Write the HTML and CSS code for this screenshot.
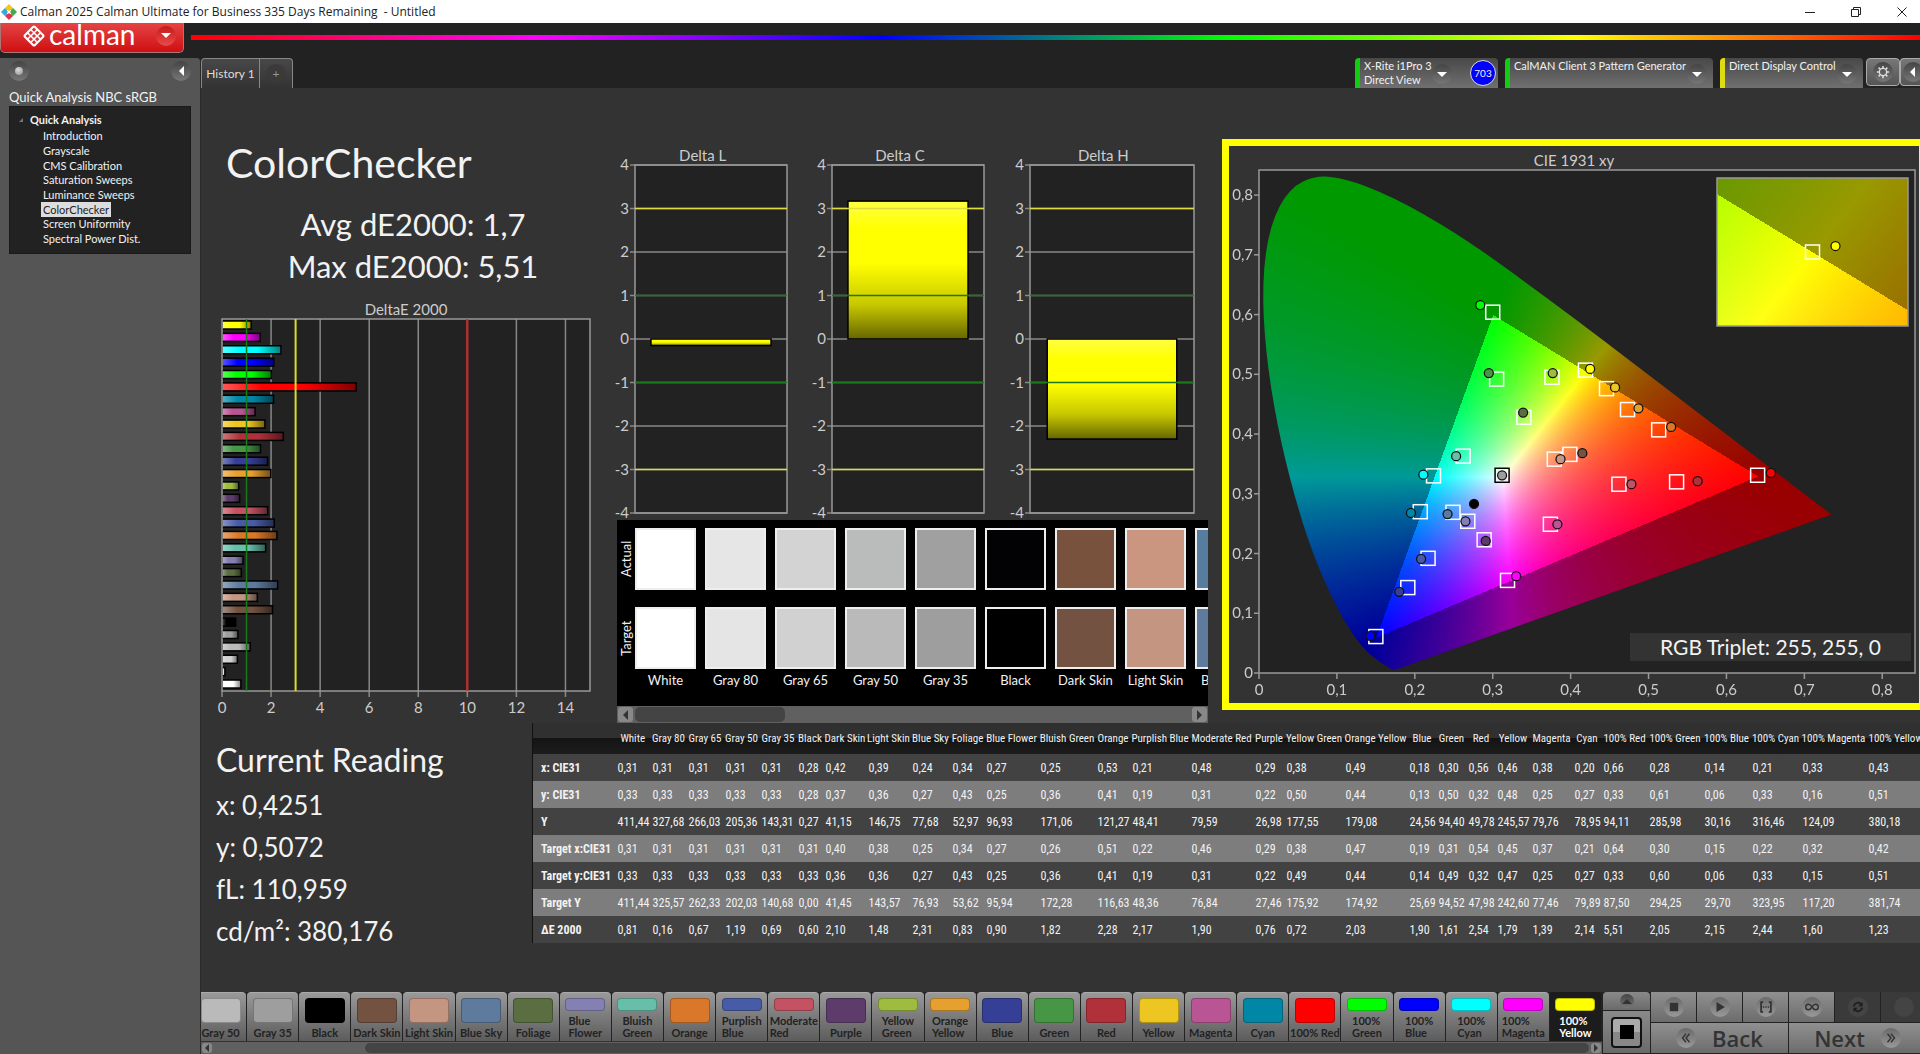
FILE: index.html
```html
<!DOCTYPE html>
<html lang="en">
<head>
  <meta charset="UTF-8">
  <meta name="viewport" content="width=device-width, initial-scale=1.0">
  <title>Calman 2025 Calman Ultimate for Business</title>
  <link rel="stylesheet" href="styles.css">
</head>
<body>
  <header class="titlebar">
    <svg class="app-icon" viewBox="0 0 16 16">
      <path d="M8 0l4 4-4 4-4-4z" fill="#f5c518"/>
      <path d="M4 4l4 4-4 4-4-4z" fill="#35a8dc"/>
      <path d="M12 4l4 4-4 4-4-4z" fill="#3fae49"/>
      <path d="M8 8l4 4-4 4-4-4z" fill="#e0334c"/>
      <path d="M6 6l4 4M10 6l-4 4" stroke="#fff" stroke-width="1"/>
      <circle cx="8" cy="8" r="1.6" fill="#fff"/>
    </svg>
    <span class="window-title">Calman 2025 Calman Ultimate for Business 335 Days Remaining &nbsp;- Untitled</span>
    <div class="window-buttons">
      <button aria-label="Minimize"><svg viewBox="0 0 10 10"><path d="M0 5.5h10"/></svg></button>
      <button aria-label="Restore"><svg viewBox="0 0 10 10"><path d="M.5 2.5h7v7h-7zM2.5 2.5v-2h7v7h-2"/></svg></button>
      <button aria-label="Close"><svg viewBox="0 0 10 10"><path d="M.5.5l9 9M9.5.5l-9 9"/></svg></button>
    </div>
  </header>

  <div class="brandbar">
    <button class="brand">
      <svg class="brand-icon" viewBox="0 0 24 24">
        <rect x="4" y="4" width="16" height="16" rx="2" transform="rotate(45 12 12)" fill="#fff"/>
        <g transform="rotate(45 12 12)" fill="#dd3030">
          <rect x="6" y="6" width="3" height="3"/><rect x="10.5" y="6" width="3" height="3"/><rect x="15" y="6" width="3" height="3"/>
          <rect x="6" y="10.5" width="3" height="3"/><rect x="10.5" y="10.5" width="3" height="3"/><rect x="15" y="10.5" width="3" height="3"/>
          <rect x="6" y="15" width="3" height="3"/><rect x="10.5" y="15" width="3" height="3"/><rect x="15" y="15" width="3" height="3"/>
        </g>
      </svg>
      <span class="brand-name">calman</span>
      <span class="knob knob-red"><i class="arrow-down"></i></span>
    </button>
    <div class="rainbow"></div>
  </div>

  <div class="app">
    <aside class="sidebar">
      <div class="sidebar-top">
        <button class="knob" aria-label="Pin"><i class="dot"></i></button>
        <button class="knob" aria-label="Collapse"><i class="arrow-left"></i></button>
      </div>
      <h3>Quick Analysis NBC sRGB</h3>
      <nav class="tree">
        <div class="tree-root"><i class="tree-mark"></i>Quick Analysis</div>
        <ul>
          <li><a href="#">Introduction</a></li>
          <li><a href="#">Grayscale</a></li>
          <li><a href="#">CMS Calibration</a></li>
          <li><a href="#">Saturation Sweeps</a></li>
          <li><a href="#">Luminance Sweeps</a></li>
          <li><a href="#" class="active">ColorChecker</a></li>
          <li><a href="#">Screen Uniformity</a></li>
          <li><a href="#">Spectral Power Dist.</a></li>
        </ul>
      </nav>
    </aside>

    <main class="main">
      <div class="tabbar">
        <button class="tab">History 1</button>
        <button class="tab tab-add" aria-label="Add tab"><span class="knob">+</span></button>
        <div class="devices">
          <button class="device green meter">
            <span class="device-name">X-Rite i1Pro 3<br>Direct View</span>
            <span class="knob"><i class="arrow-down"></i></span>
            <span class="badge">703</span>
          </button>
          <button class="device green source">
            <span class="device-name">CalMAN Client 3 Pattern Generator</span>
            <span class="knob"><i class="arrow-down"></i></span>
          </button>
          <button class="device yellow display">
            <span class="device-name">Direct Display Control</span>
            <span class="knob"><i class="arrow-down"></i></span>
          </button>
          <button class="square-btn" aria-label="Settings">
            <span class="knob"><svg viewBox="0 0 16 16"><circle cx="8" cy="8" r="4.2" fill="none" stroke="#ddd" stroke-width="1.6"/><path d="M8 1v2.4M8 12.6V15M1 8h2.4M12.6 8H15M3 3l1.8 1.8M11.2 11.2L13 13M13 3l-1.8 1.8M4.8 11.2L3 13" stroke="#ddd" stroke-width="1.8"/></svg></span>
          </button>
          <button class="square-btn cut" aria-label="Collapse panel"><span class="knob"><i class="arrow-left"></i></span></button>
        </div>
      </div>

      <div class="workspace">
        <div class="top-row">
          <section class="summary">
            <h1>ColorChecker</h1>
            <p>Avg dE2000: 1,7</p>
            <p>Max dE2000: 5,51</p>
            <figure>
              <figcaption>DeltaE 2000</figcaption>
              <svg id="deltaE" class="delta-e"></svg>
            </figure>
          </section>

          <section class="center">
            <div class="deltas">
              <figure><figcaption>Delta L</figcaption><svg id="deltaL" class="delta"></svg></figure>
              <figure><figcaption>Delta C</figcaption><svg id="deltaC" class="delta"></svg></figure>
              <figure class="wide"><figcaption>Delta H</figcaption><svg id="deltaH" class="delta"></svg></figure>
            </div>
            <div class="swatches">
              <div class="swatch-labels"><span>Actual</span><span>Target</span></div>
              <div class="swatch-list" id="swatches"></div>
            </div>
            <div class="scrollbar">
              <button aria-label="Scroll left"><i class="arrow-left"></i></button>
              <div class="track"><div class="thumb"></div></div>
              <button aria-label="Scroll right"><i class="arrow-right"></i></button>
            </div>
          </section>

          <section class="cie">
            <figure>
              <figcaption>CIE 1931 xy</figcaption>
              <div class="cie-plot" id="ciePlot">
                <canvas id="cieCanvas"></canvas>
                <svg id="cieMarks"></svg>
                <div class="triplet">RGB Triplet: 255, 255, 0</div>
              </div>
            </figure>
          </section>
        </div>

        <div class="bottom-row">
          <section class="reading">
            <h2>Current Reading</h2>
            <p>x: 0,4251</p>
            <p>y: 0,5072</p>
            <p>fL: 110,959</p>
            <p>cd/m²: 380,176</p>
          </section>
          <div class="table-wrap">
            <table id="results"></table>
          </div>
        </div>
      </div>

      <footer class="footer">
        <div class="patches">
          <div class="patch-list" id="patches"></div>
          <div class="scrollbar small">
            <button aria-label="Scroll left"><i class="arrow-left"></i></button>
            <div class="track"><div class="thumb"></div></div>
            <button aria-label="Scroll right"><i class="arrow-right"></i></button>
          </div>
        </div>
        <div class="mode">
          <button class="mode-up" aria-label="Expand"><span class="knob"><i class="arrow-up"></i></span></button>
          <button class="mode-window" aria-label="Window pattern"><i></i></button>
        </div>
        <div class="transport">
          <button aria-label="Stop"><span class="knob"><svg viewBox="0 0 20 20"><path d="M4 4h12v12H4z"/></svg></span></button>
          <button aria-label="Play"><span class="knob"><svg viewBox="0 0 20 20"><path d="M5 3l12 7-12 7z"/></svg></span></button>
          <button aria-label="Read series"><span class="knob"><svg viewBox="0 0 20 20"><path d="M6 3H3v14h3M14 3h3v14h-3" fill="none" stroke="#333" stroke-width="2.500"/><path d="M5.500 9h2v2h-2zM9 9h2v2H9zM12.500 9h2v2h-2z"/></svg></span></button>
          <button aria-label="Continuous"><span class="knob"><svg viewBox="0 0 20 20"><path d="M10 10C8 7 6.500 6 5 6a4 4 0 0 0 0 8c1.500 0 3-1 5-4s3.500-4 5-4a4 4 0 0 1 0 8c-1.500 0-3-1-5-4z" fill="none" stroke="#333" stroke-width="2"/></svg></span></button>
          <button class="off" aria-label="Refresh" disabled><span class="knob"><svg viewBox="0 0 20 20"><path d="M4 9a6 6 0 0 1 10-3.500M16 11a6 6 0 0 1-10 3.500" fill="none" stroke="#1c1c1c" stroke-width="2.500"/><path d="M16.500 3v6h-6zM3.500 17v-6h6z" fill="#1c1c1c"/></svg></span></button>
          <button class="off" aria-label="Record" disabled><span class="knob"></span></button>
          <button class="nav-btn back"><span class="knob"><svg viewBox="0 0 20 20"><path d="M10 4l-5 6 5 6M15 4l-5 6 5 6" fill="none" stroke="#333" stroke-width="2"/></svg></span>Back</button>
          <button class="nav-btn next">Next<span class="knob"><svg viewBox="0 0 20 20"><path d="M5 4l5 6-5 6M10 4l5 6-5 6" fill="none" stroke="#333" stroke-width="2"/></svg></span></button>
        </div>
      </footer>
    </main>
  </div>
  <script src="script.js"></script>
</body>
</html>
```

FILE: styles.css
```css
* {
  box-sizing: border-box;
}
body {
  margin: 0;
  height: 100vh;
  display: flex;
  flex-direction: column;
  overflow: hidden;
  background: #222;
  color: #f2f2f2;
  font-family: Lato, sans-serif;
  font-size: 14px;
}
button {
  font: inherit;
  color: inherit;
  border: none;
  padding: 0;
  background: none;
}
h1, h2, h3, p, figure, ul {
  margin: 0;
  padding: 0;
  font-weight: normal;
}
svg {
  display: block;
}

/* window title */
.titlebar {
  display: flex;
  align-items: center;
  height: 23px;
  flex: none;
  background: #fff;
  color: #222;
  padding-left: 1px;
}
.app-icon {
  width: 16px;
  height: 16px;
}
.window-title {
  flex: 1;
  padding-left: 3px;
  font-family: "Open Sans", sans-serif;
  font-size: 12px;
}
.window-buttons {
  display: flex;
  margin-right: -5px;
}
.window-buttons button {
  width: 46px;
  height: 22px;
  display: flex;
  align-items: center;
  justify-content: center;
}
.window-buttons svg {
  width: 10px;
  height: 10px;
  fill: none;
  stroke: #222;
}

/* brand */
.brandbar {
  display: flex;
  height: 35px;
  flex: none;
  gap: 7px;
}
.brand {
  width: 184px;
  height: 30px;
  display: flex;
  align-items: center;
  padding: 0 7px 4px 21px;
  border: 1px solid #a77;
  border-top: none;
  border-radius: 0 0 5px 5px;
  background: linear-gradient(#e54444, #cf0f12);
  color: #fff;
}
.brand-icon {
  width: 24px;
  height: 24px;
}
.brand-name {
  flex: 1;
  padding-left: 3px;
  text-align: left;
  font-size: 28px;
  line-height: 24px;
  margin-top: -4px;
}
.rainbow {
  flex: 1;
  height: 5px;
  margin-top: 12px;
  background: linear-gradient(90deg, #f00, #f0f 20%, #00f 40%, #0f0 60%, #ff0 80%, #f00);
}

.knob {
  display: flex;
  align-items: center;
  justify-content: center;
  width: 20px;
  height: 20px;
  flex: none;
  border-radius: 50%;
  background: linear-gradient(#444, #777);
}
.knob-red {
  background: linear-gradient(#c51a1a, #ea4a4a);
}
.arrow-down {
  border: 5px solid transparent;
  border-top-color: #fff;
  border-bottom: none;
}
.arrow-up {
  border: 5px solid transparent;
  border-bottom-color: #333;
  border-top: none;
}
.arrow-left {
  border: 5px solid transparent;
  border-right-color: #fff;
  border-left: none;
}
.arrow-right {
  border: 5px solid transparent;
  border-left-color: #333;
  border-right: none;
}
.dot {
  width: 8px;
  height: 8px;
  border-radius: 50%;
  background: radial-gradient(circle at 40% 35%, #ddd, #888);
}

/* sidebar */
.app {
  flex: 1;
  display: flex;
  min-height: 0;
}
.sidebar {
  width: 201px;
  flex: none;
  padding: 3px 9px;
  background: #555;
  border-right: 1px solid #2a2a2a;
  border-radius: 0 4px 0 0;
}
.sidebar-top {
  display: flex;
  justify-content: space-between;
  height: 28px;
}
.sidebar h3 {
  font-size: 13px;
  line-height: 17px;
}
.tree {
  height: 148px;
  padding: 5px 0 0 9px;
  background: #222;
  border: 1px solid #1a1a1a;
  font-size: 11px;
}
.tree-root {
  display: flex;
  align-items: center;
  gap: 7px;
  font-weight: bold;
  line-height: 16px;
}
.tree-mark {
  border: 2px solid transparent;
  border-right-color: #777;
  border-bottom-color: #777;
}
.tree ul {
  list-style: none;
  padding-left: 22px;
}
.tree li {
  height: 15px;
  line-height: 15px;
}
.tree li:nth-child(3n) {
  height: 14px;
}
.tree a {
  display: inline-block;
  padding: 0 2px;
  color: #f2f2f2;
  text-decoration: none;
}
.tree a.active {
  background: #ddd;
  color: #222;
}

/* tabs and devices */
.main {
  flex: 1;
  min-width: 0;
  display: flex;
  flex-direction: column;
  background: #333;
}
.tabbar {
  display: flex;
  height: 30px;
  flex: none;
  background: #222;
}
.tab {
  width: 59px;
  border: 1px solid #888;
  border-bottom: none;
  border-radius: 4px 0 0 0;
  background: linear-gradient(#484848, #333);
  color: #ddd;
  font-size: 12px;
}
.tab-add {
  width: 33px;
  border-left: none;
  border-radius: 0 4px 0 0;
  padding-left: 6px;
}
.tab-add .knob {
  background: #3a3a3a;
  color: #999;
}
.devices {
  flex: 1;
  display: flex;
  justify-content: flex-end;
  gap: 7px;
  overflow: hidden;
}
.device {
  display: flex;
  align-items: flex-start;
  border-left: 5px solid #1c1;
  border-radius: 4px 4px 0 0;
  padding: 1px 6px 0 4px;
  background: linear-gradient(#484848, #707070);
  font-size: 11px;
  line-height: 14px;
}
.device.yellow {
  border-left-color: #dd1;
}
.device-name {
  flex: 1;
  text-align: left;
  white-space: nowrap;
}
.device .knob {
  margin-top: 5px;
}
.meter {
  width: 143px;
  padding-right: 2px;
}
.source {
  width: 208px;
}
.display {
  width: 143px;
}
.badge {
  width: 26px;
  height: 26px;
  margin: 1px 0 0 18px;
  border: 1px solid #ddd;
  border-radius: 50%;
  background: #00f;
  font-size: 10px;
  line-height: 24px;
}
.square-btn {
  width: 34px;
  height: 28px;
  border: 1px solid #aaa;
  border-radius: 4px;
  background: linear-gradient(#777, #555);
  display: flex;
  align-items: center;
  justify-content: center;
  margin-left: -4px;
}
.square-btn.cut {
  width: 20px;
  padding-left: 4px;
  margin-left: -7px;
  border-radius: 4px 0 0 4px;
  border-right: none;
}
.square-btn svg {
  width: 14px;
  height: 14px;
}

/* workspace */
.workspace {
  flex: 1;
  min-height: 0;
  overflow: hidden;
}
.top-row {
  display: grid;
  grid-template-columns: 416px 592px 1fr;
}
figcaption {
  text-align: center;
  font-size: 15px;
  line-height: 20px;
  color: #ccc;
}
figure svg {
  width: 100%;
  overflow: visible;
}
svg text {
  font-family: Lato, sans-serif;
  font-size: 15px;
  fill: #ccc;
}
.summary {
  padding: 50px 27px 0 21px;
}
.summary h1 {
  padding-left: 4px;
  margin-bottom: 15px;
  font-size: 41px;
  line-height: 50px;
}
.summary p {
  padding-left: 14px;
  text-align: center;
  font-size: 31px;
  line-height: 42px;
}
.summary figure {
  margin-top: 12px;
}
.delta-e {
  height: 396px;
}
.deltas {
  display: flex;
  gap: 26px;
  padding: 57px 14px 0 0;
}
.deltas figure {
  flex: 172 0 0;
}
.deltas .wide {
  flex-grow: 184;
}
.delta {
  height: 355px;
}
.swatches {
  position: relative;
  display: flex;
  height: 186px;
  padding-top: 8px;
  margin-right: 1px;
  background: #000;
  overflow: hidden;
}
.swatch-labels {
  width: 18px;
  flex: none;
  display: flex;
  flex-direction: column;
  gap: 17px;
  font-size: 13px;
}
.swatch-labels span {
  height: 62px;
  line-height: 18px;
  text-align: center;
  writing-mode: vertical-rl;
  transform: rotate(180deg);
}
.swatch-list {
  display: flex;
  gap: 9px;
}
.swatch {
  width: 61px;
  flex: none;
  text-align: center;
  font-size: 13px;
  line-height: 22px;
  white-space: nowrap;
}
.swatch i {
  display: block;
  height: 62px;
  border: 2px solid #eee;
}
.swatch i + i {
  margin-top: 17px;
}
.scrollbar {
  display: flex;
  height: 17px;
  background: #606060;
}
.center .scrollbar {
  margin-right: 1px;
}
.scrollbar button {
  width: 15px;
  height: 15px;
  margin: 1px;
  display: flex;
  align-items: center;
  justify-content: center;
  border-radius: 3px;
  background: #888;
}
.scrollbar .arrow-left {
  border-right-color: #333;
}
.track {
  flex: 1;
  padding: 1px;
}
.thumb {
  width: 27%;
  height: 100%;
  border-radius: 5px;
  background: #444;
}

/* chromaticity */
.cie {
  align-self: start;
  margin: 51px -6px 0 13px;
  border: 7px solid #ff0;
  padding-top: 4px;
}
.cie-plot {
  position: relative;
  height: 533px;
}
.cie-plot canvas, .cie-plot svg {
  position: absolute;
  left: 0;
  top: 0;
}
.cie-plot svg {
  width: 100%;
  height: 100%;
}
.triplet {
  position: absolute;
  right: 8px;
  bottom: 42px;
  width: 281px;
  text-align: center;
  font-size: 21px;
  line-height: 28px;
  background: #333;
}

/* readings and results */
.bottom-row {
  display: flex;
}
.reading {
  width: 331px;
  flex: none;
  padding: 16px 0 0 15px;
  font-size: 26px;
  line-height: 42px;
}
.reading h2 {
  font-size: 32px;
  margin-bottom: 3px;
}
.table-wrap {
  flex: 1;
  min-width: 0;
  overflow: hidden;
}
table {
  width: max-content;
  table-layout: fixed;
  border-collapse: collapse;
  border-left: 1px solid #111;
  font-family: "Roboto Condensed", "Open Sans", sans-serif;
  font-size: 12px;
  white-space: nowrap;
}
th, td {
  padding: 0 0 0 2px;
  text-align: left;
}
thead tr {
  height: 31px;
  background: linear-gradient(#303030 50%, #141414 50%, #1c1c1c);
}
thead th {
  padding: 0;
  text-align: center;
  font-size: 11px;
  font-weight: normal;
}
tbody tr {
  height: 27px;
  background: #424242;
}
tbody tr:nth-child(even) {
  background: #7d7d7d;
}
tbody th {
  padding-left: 8px;
}

/* footer */
.footer {
  display: flex;
  height: 62px;
  flex: none;
  background: #222;
}
.patches {
  flex: 1;
  min-width: 0;
  overflow: hidden;
}
.patch-list {
  display: grid;
  grid-template-columns: repeat(27, minmax(0, 1fr));
  margin-left: -6px;
  height: 49px;
}
.patch {
  display: flex;
  flex-direction: column;
  align-items: center;
  margin-right: 1px;
  padding: 5px 0 2px;
  border-top: 1px solid #aaa;
  border-radius: 4px 4px 0 0;
  background: linear-gradient(#999, #5c5c5c);
  color: #222;
  font-size: 11px;
  font-weight: bold;
  line-height: 12px;
}
.patch i {
  width: 40px;
  flex: 1;
  border-radius: 4px;
  border: 1px solid rgba(0, 0, 0, 0.25);
}
.patch span {
  white-space: nowrap;
  text-align: left;
  padding-top: 4px;
}
.patch.selected {
  background: #1c1c1c;
  border-top-color: #1c1c1c;
  color: #fff;
}
.scrollbar.small {
  height: 13px;
  border-top: 1px solid #333;
}
.scrollbar.small button {
  width: 10px;
  height: 10px;
}
.scrollbar.small i {
  border-width: 4px;
}
.scrollbar.small .arrow-left {
  border-left: none;
}
.scrollbar.small .arrow-right {
  border-right: none;
}
.small .thumb {
  width: 89%;
  margin-left: auto;
}
.mode {
  width: 49px;
  display: flex;
  flex-direction: column;
  gap: 1px;
  padding: 0 1px;
}
.mode button {
  display: flex;
  align-items: center;
  justify-content: center;
  background: linear-gradient(#8a8a8a, #6a6a6a);
  border-radius: 4px 4px 0 0;
}
.mode-up {
  height: 18px;
}
.mode-up .knob {
  width: 14px;
  height: 14px;
}
.mode .mode-window {
  flex: 1;
  border-radius: 0;
  margin-bottom: 1px;
}
.mode-window i {
  width: 31px;
  height: 31px;
  border: 2px solid #111;
  border-radius: 4px;
  background: linear-gradient(#000, #000) center / 14px 14px no-repeat, linear-gradient(#aaa 50%, #888 50%);
}
.transport {
  width: 269px;
  display: grid;
  grid-template-columns: repeat(6, 45px);
  grid-template-rows: 30px 30px;
  gap: 1px;
}
.transport button {
  display: flex;
  align-items: center;
  justify-content: center;
  background: linear-gradient(#909090, #6c6c6c);
}
.transport .knob {
  background: linear-gradient(#6a6a6a, #999);
}
.transport svg {
  width: 14px;
  height: 14px;
  fill: #333;
}
.transport .off {
  background: #3a3a3a;
}
.transport .off .knob {
  background: #444;
}
.transport .nav-btn {
  grid-column: span 3;
  gap: 16px;
  color: #333;
  font-family: "Open Sans", sans-serif;
  font-size: 22px;
  font-weight: 600;
  line-height: 30px;
}
```

FILE: script.js
```js
// name, actual colour, target colour, column width, x, y, Y, target x, target y, target Y, dE
const patches = [
  ['White', '#ffffff', '#ffffff', 35, '0,31', '0,33', '411,44', '0,31', '0,33', '411,44', '0,81'],
  ['Gray 80', '#e6e6e6', '#e5e5e5', 36, '0,31', '0,33', '327,68', '0,31', '0,33', '325,57', '0,16'],
  ['Gray 65', '#d3d3d3', '#d1d1d1', 37, '0,31', '0,33', '266,03', '0,31', '0,33', '262,33', '0,67'],
  ['Gray 50', '#b9bcbb', '#bababa', 36, '0,31', '0,33', '205,36', '0,31', '0,33', '202,03', '1,19'],
  ['Gray 35', '#a0a0a0', '#9e9e9e', 37, '0,31', '0,33', '143,31', '0,31', '0,33', '140,68', '0,69'],
  ['Black', '#020204', '#000000', 27, '0,28', '0,28', '0,27', '0,31', '0,33', '0,00', '0,60'],
  ['Dark Skin', '#79523e', '#735242', 43, '0,42', '0,37', '41,15', '0,40', '0,36', '41,45', '2,10'],
  ['Light Skin', '#ca967f', '#c49682', 44, '0,39', '0,36', '146,75', '0,38', '0,36', '143,57', '1,48'],
  ['Blue Sky', '#567c9f', '#5e7a9d', 40, '0,24', '0,27', '77,68', '0,25', '0,27', '76,93', '2,31'],
  ['Foliage', '#5a6e42', '#5a6e42', 34, '0,34', '0,43', '52,97', '0,34', '0,43', '53,62', '0,83'],
  ['Blue Flower', '#8580b3', '#8580b3', 54, '0,27', '0,25', '96,93', '0,27', '0,25', '95,94', '0,90'],
  ['Bluish Green', '#67bfaa', '#67bfaa', 57, '0,25', '0,36', '171,06', '0,26', '0,36', '172,28', '1,82'],
  ['Orange', '#da7829', '#da7829', 35, '0,53', '0,41', '121,27', '0,51', '0,41', '116,63', '2,28'],
  ['Purplish Blue', '#485ba6', '#485ba6', 59, '0,21', '0,19', '48,41', '0,22', '0,19', '48,36', '2,17'],
  ['Moderate Red', '#c45262', '#c45262', 64, '0,48', '0,31', '79,59', '0,46', '0,31', '76,84', '1,90'],
  ['Purple', '#5d3c6c', '#5d3c6c', 31, '0,29', '0,22', '26,98', '0,29', '0,22', '27,46', '0,76'],
  ['Yellow Green', '#9dbc40', '#9dbc40', 59, '0,38', '0,50', '177,55', '0,38', '0,49', '175,92', '0,72'],
  ['Orange Yellow', '#e6a030', '#e6a030', 64, '0,49', '0,44', '179,08', '0,47', '0,44', '174,92', '2,03'],
  ['Blue', '#353f96', '#353f96', 29, '0,18', '0,13', '24,56', '0,19', '0,14', '25,69', '1,90'],
  ['Green', '#479646', '#479646', 30, '0,30', '0,50', '94,40', '0,31', '0,49', '94,52', '1,61'],
  ['Red', '#b03139', '#b03139', 29, '0,56', '0,32', '49,78', '0,54', '0,32', '47,98', '2,54'],
  ['Yellow', '#eec621', '#eec621', 35, '0,46', '0,48', '245,57', '0,45', '0,47', '242,60', '1,79'],
  ['Magenta', '#ba5595', '#ba5595', 42, '0,38', '0,25', '79,76', '0,37', '0,25', '77,46', '1,39'],
  ['Cyan', '#0087a5', '#0087a5', 29, '0,20', '0,27', '78,95', '0,21', '0,27', '79,89', '2,14'],
  ['100% Red', '#ff0000', '#ff0000', 46, '0,66', '0,33', '94,11', '0,64', '0,33', '87,50', '5,51'],
  ['100% Green', '#00ff00', '#00ff00', 55, '0,28', '0,61', '285,98', '0,30', '0,60', '294,25', '2,05'],
  ['100% Blue', '#0000ff', '#0000ff', 48, '0,14', '0,06', '30,16', '0,15', '0,06', '29,70', '2,15'],
  ['100% Cyan', '#00ffff', '#00ffff', 50, '0,21', '0,33', '316,46', '0,22', '0,33', '323,95', '2,44'],
  ['100% Magenta', '#ff00ff', '#ff00ff', 66, '0,33', '0,16', '124,09', '0,32', '0,15', '117,20', '1,60'],
  ['100% Yellow', '#ffff00', '#ffff00', 58, '0,43', '0,51', '380,18', '0,42', '0,51', '381,74', '1,23']
];
const rowNames = ['x: CIE31', 'y: CIE31', 'Y', 'Target x:CIE31', 'Target y:CIE31', 'Target Y', 'ΔE 2000'];

// target x, target y, measured x, measured y, colour
const marks = [
  [0.300, 0.604, 0.284, 0.616, '#00ff00'],
  [0.305, 0.492, 0.295, 0.502, '#479646'],
  [0.376, 0.495, 0.377, 0.502, '#9dbc40'],
  [0.419, 0.507, 0.425, 0.509, '#ffff00'],
  [0.446, 0.476, 0.457, 0.478, '#eec621'],
  [0.473, 0.441, 0.487, 0.443, '#e6a030'],
  [0.513, 0.407, 0.529, 0.412, '#da7829'],
  [0.340, 0.428, 0.339, 0.436, '#5a6e42'],
  [0.379, 0.358, 0.387, 0.358, '#c69783'],
  [0.399, 0.366, 0.415, 0.368, '#765242'],
  [0.262, 0.363, 0.253, 0.363, '#67bfaa'],
  [0.224, 0.330, 0.211, 0.332, '#00ffff'],
  [0.207, 0.270, 0.195, 0.268, '#0087a5'],
  [0.249, 0.269, 0.242, 0.266, '#5c7a9e'],
  [0.268, 0.254, 0.265, 0.254, '#8580b3'],
  [0.289, 0.223, 0.291, 0.221, '#5d3c6c'],
  [0.217, 0.192, 0.208, 0.191, '#485ba6'],
  [0.191, 0.143, 0.180, 0.136, '#353f96'],
  [0.150, 0.061, 0.143, 0.062, '#0000ff'],
  [0.319, 0.155, 0.330, 0.162, '#ff00ff'],
  [0.374, 0.249, 0.383, 0.249, '#ba5595'],
  [0.462, 0.316, 0.478, 0.316, '#c15264'],
  [0.536, 0.320, 0.563, 0.321, '#ae3139'],
  [0.640, 0.331, 0.657, 0.335, '#ff0000']
];

const locus = [
  [.1741, .005], [.1714, .0051], [.1644, .0109], [.1566, .0177], [.151, .0227], [.144, .0297],
  [.1355, .0399], [.1241, .0578], [.1096, .0868], [.0913, .1327], [.0687, .2007], [.0454, .295],
  [.0235, .4127], [.0082, .5384], [.0039, .6548], [.0139, .7502], [.0389, .812], [.0743, .8338],
  [.1142, .8262], [.1547, .8059], [.1929, .7816], [.2296, .7543], [.2658, .7243], [.3016, .6923],
  [.3731, .6245], [.4441, .5547], [.5125, .4866], [.5752, .4242], [.627, .3725], [.6658, .334],
  [.6915, .3083], [.7079, .292], [.719, .2809], [.726, .274], [.7347, .2653]
];

const byId = id => document.getElementById(id);
const num = s => parseFloat(s.replace(',', '.'));
const line = (x1, y1, x2, y2, color, w = 1.5) =>
  `<line x1="${x1}" y1="${y1}" x2="${x2}" y2="${y2}" stroke="${color}" stroke-width="${w}"/>`;
const text = (x, y, s, anchor) => `<text x="${x}" y="${y}" text-anchor="${anchor}">${s}</text>`;

function drawDeltaE() {
  const svg = byId('deltaE');
  const w = svg.clientWidth, h = 372, unit = w / 15;
  let grads = '', out = `<rect width="${w}" height="${h}" fill="#222"/>`;
  for (let i = 2; i < 15; i += 2) out += line(i * unit, 0, i * unit, h + 6, '#888');
  for (let i = 0; i < 15; i += 2) out += text(i * unit, h + 22, i, 'middle');
  out += line(0, h, 0, h + 6, '#888');
  [...patches].reverse().forEach((p, i) => {
    grads += `<linearGradient id="g${i}"><stop offset="0" stop-color="#fff" stop-opacity=".35"/>
      <stop offset=".3" stop-color="#fff" stop-opacity="0"/><stop offset=".6" stop-color="#000" stop-opacity="0"/>
      <stop offset="1" stop-color="#000" stop-opacity=".5"/></linearGradient>`;
    const box = `x="0" y="${2 + i * 12.38}" width="${num(p[10]) * unit - 1}" height="8"`;
    out += `<rect ${box} fill="${p[2]}"/><rect ${box} fill="url(#g${i})" stroke="#000" stroke-width="1.5"/>`;
  });
  out += `<rect width="${w}" height="${h}" fill="none" stroke="#999" stroke-width="1.5"/>`;
  out += line(unit, 0, unit, h, '#1a7a1a') + line(3 * unit, 0, 3 * unit, h, '#dcdc30', 2) + line(10 * unit, 0, 10 * unit, h, '#dc2020', 2);
  svg.innerHTML = `<defs>${grads}</defs>${out}`;
}

function drawDelta(id, value) {
  const svg = byId(id);
  const left = 18, w = svg.clientWidth - left - 1, h = 348, unit = h / 8;
  const mid = h / 2, top = value > 0 ? mid - value * unit : mid, pad = w * 0.105;
  let out = `<defs><linearGradient id="${id}g" x2="0" y2="1"><stop offset="0" stop-color="#ff4"/>
    <stop offset=".2" stop-color="#ff0"/><stop offset=".45" stop-color="#ff0"/><stop offset=".75" stop-color="#c8c800"/>
    <stop offset="1" stop-color="#660"/></linearGradient></defs>
    <rect x="${left}" width="${w}" height="${h}" fill="#222"/>`;
  for (let v = -4; v <= 4; v++) {
    const y = mid - v * unit;
    out += line(left - 5, y, left + w, y, '#888') + text(left - 6, y + 5, v, 'end');
  }
  out += `<rect x="${left}" width="${w}" height="${h}" fill="none" stroke="#999" stroke-width="1.5"/>`;
  out += `<rect x="${left + pad}" y="${top}" width="${w - 2 * pad}" height="${Math.abs(value) * unit}" fill="url(#${id}g)" stroke="#000" stroke-width="1.5"/>`;
  for (const v of [3, 1, -1, -3]) {
    out += line(left, mid - v * unit, left + w, mid - v * unit, Math.abs(v) === 3 ? '#dcdc40' : '#1a7a1a');
  }
  svg.innerHTML = out;
}

// xy chromaticity to a display colour, dimmed outside of the Rec.709 triangle
function xyColor(x, y) {
  y = Math.max(y, 0.0001);
  const X = x / y, Z = (1 - x - y) / y;
  const lin = [
    3.2406 * X - 1.5372 - 0.4986 * Z,
    -0.9689 * X + 1.8758 + 0.0415 * Z,
    0.0557 * X - 0.204 + 1.057 * Z
  ];
  const outside = Math.min(...lin) < 0;
  const max = Math.max(...lin);
  return lin.map(c => Math.max(c, 0) / max * (outside ? 153 : 255));
}

function colorField(w, h, x0, y0, dx, dy) {
  const c = document.createElement('canvas');
  c.width = w;
  c.height = h;
  const ctx = c.getContext('2d');
  const img = ctx.createImageData(w, h);
  for (let j = 0, k = 0; j < h; j++) {
    for (let i = 0; i < w; i++, k += 4) {
      const [r, g, b] = xyColor(x0 + i * dx, y0 - j * dy);
      img.data[k] = r;
      img.data[k + 1] = g;
      img.data[k + 2] = b;
      img.data[k + 3] = 255;
    }
  }
  ctx.putImageData(img, 0, 0);
  return c;
}

function drawCie() {
  const plot = byId('ciePlot'), canvas = byId('cieCanvas');
  const W = plot.clientWidth, H = plot.clientHeight;
  const left = 30, w = W - left - 4, h = 503, range = 0.842;
  const px = x => left + x / range * w, py = y => h - y / range * h;
  canvas.width = W;
  canvas.height = H;
  const ctx = canvas.getContext('2d');
  ctx.fillStyle = '#222';
  ctx.fillRect(left, 0, w, h);
  ctx.save();
  ctx.beginPath();
  const pts = locus.map(([x, y]) => [px(x), py(y)]);
  ctx.moveTo(...pts[0]);
  for (let i = 1; i < pts.length - 1; i++) {
    ctx.quadraticCurveTo(...pts[i], (pts[i][0] + pts[i + 1][0]) / 2, (pts[i][1] + pts[i + 1][1]) / 2);
  }
  ctx.lineTo(...pts[pts.length - 1]);
  ctx.closePath();
  ctx.clip();
  ctx.drawImage(colorField(w, h, 0, range, range / w, range / h), left, 0);
  ctx.restore();

  // 5x detail around the selected patch
  const iw = 191, ih = 148, ix = W - 11 - iw, iy = 8;
  const sx = range / w / 5, sy = range / h / 5;
  ctx.drawImage(colorField(iw, ih, 0.4193 - iw / 2 * sx, 0.5053 + ih / 2 * sy, sx, sy), ix, iy);

  const square = (x, y, c = '#fff') => `<rect x="${x - 7}" y="${y - 7}" width="14" height="14" fill="none" stroke="${c}" stroke-width="1.5"/>`;
  const circle = (x, y, c) => `<circle cx="${x}" cy="${y}" r="4.5" fill="${c}" stroke="#111" stroke-width="1.25"/>`;
  let out = `<rect x="${left}" y="0" width="${w}" height="${h}" fill="none" stroke="#999" stroke-width="1.5"/>
    <rect x="${ix}" y="${iy}" width="${iw}" height="${ih}" fill="none" stroke="#999" stroke-width="1.5"/>`;
  for (let i = 0; i <= 8; i++) {
    const label = i ? '0,' + i : '0';
    out += line(px(i / 10), h, px(i / 10), h + 6, '#999') + text(px(i / 10), h + 22, label, 'middle');
    out += line(left - 5, py(i / 10), left, py(i / 10), '#999') + text(left - 6, py(i / 10) + 5, label, 'end');
  }
  for (const m of marks) out += square(px(m[0]), py(m[1]));
  out += `<rect x="${px(0.312) - 6}" y="${py(0.331) - 6}" width="12" height="12" fill="none" stroke="#fff"/>`;
  out += square(px(0.312), py(0.331), '#000');
  for (const m of marks) out += circle(px(m[2]), py(m[3]), m[4]);
  out += circle(px(0.312), py(0.331), '#9e9e9e') + circle(px(0.276), py(0.283), '#000');
  out += square(ix + iw / 2, iy + ih / 2) + circle(ix + iw / 2 + 23, iy + ih / 2 - 6, '#ff0');
  byId('cieMarks').innerHTML = out;
}

function drawAll() {
  drawDeltaE();
  drawDelta('deltaL', -0.15);
  drawDelta('deltaC', 3.17);
  drawDelta('deltaH', -2.3);
  drawCie();
}

// only the swatches in the scrolled view
byId('swatches').innerHTML = patches.slice(0, 9).map(p =>
  `<div class="swatch"><i style="background:${p[1]}"></i><i style="background:${p[2]}"></i>${p[0]}</div>`).join('');

byId('results').innerHTML =
  '<colgroup><col style="width:83px">' + patches.map(p => `<col style="width:${p[3]}px">`).join('') + '</colgroup>' +
  '<thead><tr><th></th>' + patches.map(p => `<th scope="col">${p[0]}</th>`).join('') + '</tr></thead><tbody>' +
  rowNames.map((name, r) => `<tr><th scope="row">${name}</th>` + patches.map(p => `<td>${p[4 + r]}</td>`).join('') + '</tr>').join('') +
  '</tbody>';

// these names stay on one line in the patch strip
const oneLine = ['Gray 50', 'Gray 35', 'Dark Skin', 'Light Skin', 'Blue Sky', '100% Red'];
byId('patches').innerHTML = patches.slice(3).map(p => {
  const name = oneLine.includes(p[0]) ? p[0] : p[0].replace(' ', '<br>');
  const selected = p[0] === '100% Yellow' ? ' selected' : '';
  return `<button class="patch${selected}"><i style="background:${p[2]}"></i><span>${name}</span></button>`;
}).join('');

drawAll();
window.addEventListener('resize', drawAll);
```
